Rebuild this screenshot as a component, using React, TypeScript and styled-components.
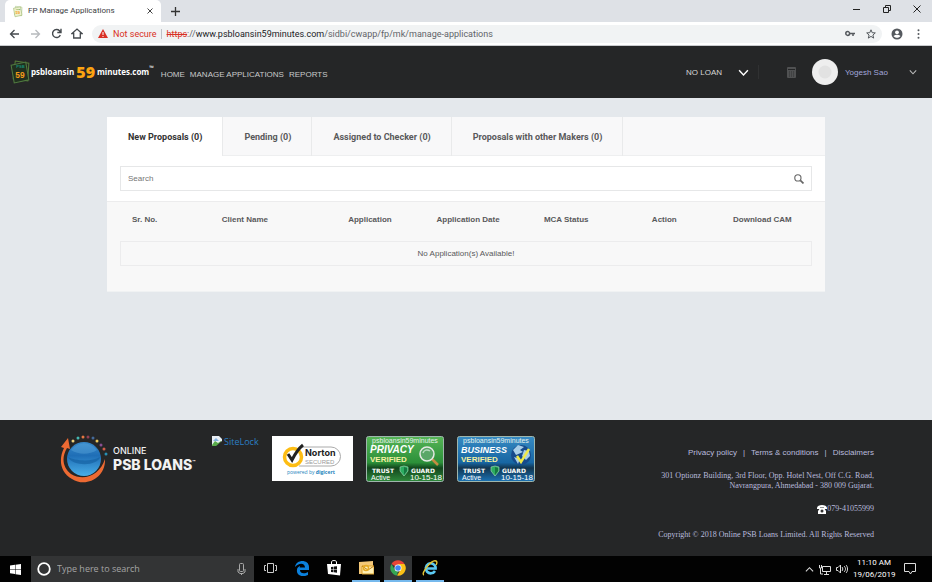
import React from "react";
import styled, { createGlobalStyle } from "styled-components";

const sans = `"Liberation Sans", Arial, sans-serif`;
const heading = `Roboto, "Liberation Sans", sans-serif`;
const browser = `Roboto, "Open Sans", sans-serif`;
const system = `"Open Sans", "Noto Sans", sans-serif`;

const GlobalStyle = createGlobalStyle`
  *, *::before, *::after { box-sizing: border-box; }
  body { margin: 0; background: #e4e8ec; font-family: ${sans}; }
  button, input { font: inherit; }
  button { border: 0; padding: 0; background: none; color: inherit; cursor: pointer; }
  a { color: inherit; text-decoration: none; }
  svg { display: block; flex: none; }
  p, h1 { margin: 0; }
`;

const Screen = styled.div`
  min-height: 100vh;
  display: flex;
  flex-direction: column;
`;

const TabStrip = styled.div`
  display: flex;
  align-items: flex-end;
  height: 22px;
  padding-left: 5px;
  background: #dee1e6;
  color: #3c4043;
`;

const BrowserTab = styled.div`
  display: flex;
  align-items: center;
  width: 156px;
  height: 22px;
  padding: 0 5px 0 8px;
  gap: 5px;
  border-radius: 5px 5px 0 0;
  background: #fff;
  font: 8px/22px ${browser};
`;

const TabTitle = styled.span`
  flex: 1;
  white-space: nowrap;
`;

const IconButton = styled.button`
  display: flex;
  align-items: center;
  justify-content: center;
  flex: none;
  width: 12px;
  height: 12px;
`;

const NewTab = styled(IconButton)`
  align-self: center;
  margin-left: 8px;
`;

const WindowControls = styled.div`
  display: flex;
  align-self: flex-start;
  gap: 18px;
  margin-left: auto;
  padding: 3px 9px 0 0;
`;

const AddressBar = styled.div`
  display: flex;
  align-items: center;
  height: 24px;
  padding: 0 8px;
  gap: 9px;
  background: #fff;
  border-bottom: 1px solid #c9cbce;
  color: #5f6368;
`;

const Omnibox = styled.div`
  display: flex;
  flex: 1;
  align-items: center;
  height: 18px;
  padding: 0 5px 0 6px;
  border-radius: 9px;
  background: #f1f3f4;
  font: 9px/18px ${browser};
  white-space: nowrap;
`;

const Insecure = styled.span`
  margin-left: 5px;
  padding-right: 4px;
  color: #d93025;
`;

const Url = styled.span`
  flex: 1;
  padding-left: 5px;
  border-left: 1px solid #bdc1c6;
  line-height: 10px;
  s { color: #d93025; }
  b { color: #202124; font-weight: 400; }
`;

const OmniActions = styled.div`
  display: flex;
  gap: 9px;
`;

const SiteHeader = styled.header`
  display: flex;
  align-items: center;
  height: 52px;
  padding: 0 15px 0 10px;
  background: #252627;
  color: #fff;
`;

const Brand = styled.a`
  display: flex;
  align-items: center;
  font: 700 8px/16px ${system};
  white-space: nowrap;
`;

const BrandNumber = styled.span`
  margin: 0 2px;
  color: #fca311;
  font-size: 16px;
  font-weight: 800;
`;

const BrandMark = styled.span`
  align-self: flex-start;
  font-size: 6px;
  line-height: 16px;
`;

const SiteNav = styled.nav`
  display: flex;
  gap: 5px;
  margin: 5px 0 0 7px;
  color: #c9cacb;
  font-size: 8px;
  line-height: 12px;
`;

const AccountArea = styled.div`
  display: flex;
  align-items: center;
  margin-left: auto;
`;

const LoanPicker = styled.button`
  display: flex;
  align-items: center;
  justify-content: space-between;
  width: 73px;
  height: 14px;
  padding-right: 9px;
  border-right: 1px solid #303132;
  color: #d6d6d6;
  font-size: 8px;
`;

const CalculatorButton = styled(IconButton)`
  margin: 0 15px 0 26px;
`;

const Avatar = styled.span`
  display: flex;
  align-items: center;
  justify-content: center;
  width: 26px;
  height: 26px;
  border-radius: 50%;
  background: #eee;
`;

const UserMenu = styled.button`
  display: flex;
  align-items: center;
  justify-content: space-between;
  width: 72px;
  margin-left: 7px;
  color: #a3a6dc;
  font-size: 8px;
`;

const Main = styled.main`
  flex: 1;
  padding: 19px 107px;
  background: #e4e8ec;
`;

const Panel = styled.section`
  border-bottom: 1px solid #f0f2f3;
  background: #fff;
`;

const TabList = styled.div`
  display: flex;
  height: 39px;
  border-bottom: 1px solid #eeeff0;
  background: #f8f8f9;
`;

const ProposalTab = styled.button<{ $active?: boolean }>`
  height: 39px;
  padding: 0 20px 0 21px;
  border-right: 1px solid #e9eaeb;
  background: ${(p) => (p.$active ? "#fff" : "transparent")};
  color: ${(p) => (p.$active ? "#333" : "#58595b")};
  font-family: ${heading};
  font-size: 9px;
  font-weight: 700;
  white-space: nowrap;
`;

const SearchRow = styled.div`
  padding: 10px 13px;
`;

const SearchBox = styled.label`
  display: flex;
  align-items: center;
  height: 25px;
  padding: 0 7px;
  border: 1px solid #e6e7e8;
  background: #fff;
`;

const SearchInput = styled.input`
  flex: 1;
  min-width: 0;
  height: 20px;
  padding: 0;
  border: 0;
  outline: 0;
  background: transparent;
  color: #555;
  font-size: 8px;
  &::placeholder { color: #757575; opacity: 1; }
`;

const TableArea = styled.div`
  padding: 0 13px 25px;
  border-top: 1px solid #ececed;
  background: #f8f8f8;
`;

const Table = styled.table`
  width: 100%;
  border-collapse: collapse;
  table-layout: fixed;
`;

const HeadCell = styled.th<{ $width?: string }>`
  width: ${(p) => p.$width ?? "auto"};
  height: 39px;
  padding: 0 0 4px;
  color: #58595b;
  font-size: 8px;
  font-weight: 700;
  white-space: nowrap;
`;

const EmptyCell = styled.td`
  height: 24px;
  padding: 0;
  border: 1px solid #ececed;
  color: #58595b;
  font-size: 8px;
  text-align: center;
`;

const SiteFooter = styled.footer`
  display: flex;
  align-items: flex-start;
  min-height: 136px;
  padding: 14px 58px 0 60px;
  background: #252627;
  color: #b9bbdd;
`;

const FooterBrand = styled.div`
  display: flex;
  align-items: center;
  gap: 5px;
  width: 152px;
  color: #f2f2f2;
  font: 500 9px/12px Inter, sans-serif;
`;

const BrandName = styled.div`
  font-size: 14px;
  font-weight: 800;
  line-height: 15px;
  white-space: nowrap;
  sup { font-size: 5px; line-height: 0; vertical-align: 6px; }
`;

const SealRow = styled.div`
  display: flex;
  gap: 13px;
  padding-top: 2px;
`;

const SiteLock = styled.a`
  display: flex;
  align-items: flex-start;
  gap: 1px;
  color: #2b7fc4;
  font: 9px/12px ${system};
`;

const FooterInfo = styled.div`
  flex: 1;
  padding-top: 13px;
  font: 8px/10px "Liberation Serif", "Times New Roman", serif;
  text-align: right;
`;

const PolicyLinks = styled.nav`
  display: flex;
  justify-content: flex-end;
  margin-bottom: 12px;
  font: 8px/12px ${sans};
  a + a::before { content: "|"; margin: 0 6px; }
`;

const InfoLine = styled.p<{ $gap?: number }>`
  margin-bottom: ${(p) => p.$gap ?? 0}px;
`;

const Phone = styled.p`
  display: flex;
  align-items: center;
  justify-content: flex-end;
  margin-bottom: 16px;
`;

const Taskbar = styled.div`
  display: flex;
  align-items: stretch;
  height: 26px;
  background: #020202;
  color: #fff;
`;

const StartButton = styled.button`
  display: flex;
  align-items: center;
  justify-content: center;
  width: 31px;
`;

const SystemSearch = styled.label`
  display: flex;
  align-items: center;
  gap: 6px;
  width: 223px;
  padding: 0 8px 0 6px;
  background: #333435;
`;

const SystemInput = styled.input`
  flex: 1;
  min-width: 0;
  height: 20px;
  padding: 0;
  border: 0;
  outline: 0;
  background: transparent;
  color: #fff;
  font: 9px/20px ${system};
  &::placeholder { color: #a5a5a5; opacity: 1; }
`;

const Apps = styled.div`
  display: flex;
  gap: 4px;
  padding-left: 2px;
`;

const AppButton = styled.button<{ $open?: boolean; $focused?: boolean }>`
  display: flex;
  align-items: center;
  justify-content: center;
  width: 28px;
  border-bottom: 2px solid ${(p) => (p.$open ? "#76b9ed" : "transparent")};
  background: ${(p) => (p.$focused ? "#333537" : "transparent")};
`;

const Tray = styled.div`
  display: flex;
  align-items: center;
  gap: 5px;
  margin-left: auto;
  padding-right: 16px;
`;

const Clock = styled.time`
  width: 42px;
  margin-right: 4px;
  font: 8px/12px ${browser};
  text-align: center;
`;

const Chevron = ({ size, color, weight = 1 }: { size: number; color: string; weight?: number }) => (
  <svg width={size} height={size} viewBox="0 0 10 10" fill="none" stroke={color} strokeWidth={weight}>
    <path d="M1 3l4 4.3L9 3" />
  </svg>
);

const NotesLogo = ({ size, bright }: { size: number; bright?: boolean }) => (
  <svg width={size} height={size + 3} viewBox="0 0 20 23" fill="none">
    <path d="M5 1l13 2-1 17-14-2z" stroke={bright ? "#557b37" : "#9fbd72"} />
    <path d="M1 5l14-3 3 17-14 3z" fill={bright ? "#20301f" : "#eef2cf"} stroke={bright ? "#517c40" : "#8ead5f"} />
    <text x="6" y="8" fill={bright ? "#168a72" : "#6c9b4c"} fontSize="4" fontWeight="700" fontFamily="Liberation Sans">PSB</text>
    <text x="5" y="17" fill="#f59b19" fontSize="8" fontWeight="700" fontFamily="Liberation Sans">59</text>
  </svg>
);

const PsbGlobe = () => (
  <svg width="48" height="49" viewBox="0 0 48 49">
    <defs>
      <linearGradient id="globe" x2="0" y2="1">
        <stop stopColor="#3688c9" />
        <stop offset=".4" stopColor="#1f6eb6" />
        <stop offset="1" stopColor="#49aee8" />
      </linearGradient>
    </defs>
    <circle cx="24" cy="25" r="17" fill="url(#globe)" />
    <path d="M8 23c7 4 24 5 32 0-2 9-27 10-32 0" fill="#135e9e" opacity=".6" />
    <path d="M11 16c7-9 19-9 26 0-8 5-18 5-26 0" fill="#67b3e2" opacity=".35" />
    <path d="M1 13L8 4l2 11-3-1C1 24 3 34 11 40c13 8 29 1 34-15 1 19-19 29-33 20C-1 38-1 24 4 14z" fill="#ed6a33" />
    {[
      [13, 7, "#f2d37c"], [18, 4, "#45b8b1"], [23, 3, "#e67642"], [28, 3, "#923e52"], [33, 4, "#456a9a"],
      [37, 7, "#edc75b"], [41, 11, "#894f91"], [44, 15, "#d25c49"], [46, 20, "#278fb4"],
    ].map(([cx, cy, fill]) => (
      <circle key={cx} cx={cx} cy={cy} r="1.5" fill={String(fill)} />
    ))}
  </svg>
);

const NortonSeal = () => (
  <svg width="81" height="45" viewBox="0 0 81 45" role="img" aria-label="Norton Secured powered by digicert">
    <path fill="#fff" d="M0 0h81v45H0z" />
    <path d="M28 11h31a9 9 0 010 19H27" fill="none" stroke="#aaa" />
    <circle cx="21" cy="21" r="8.5" fill="#fff" stroke="#fdbd13" strokeWidth="3.5" />
    <path d="M16 18l4 6c3-6 6-11 11-15" fill="none" stroke="#222" strokeWidth="3" />
    <text x="33" y="20" fill="#222" fontFamily="Inter" fontSize="9" fontWeight="700">Norton</text>
    <text x="33" y="28" fill="#999" fontFamily="Liberation Sans" fontSize="6">SECURED</text>
    <text x="15" y="38" fill="#2584bd" fontFamily="Open Sans" fontSize="5">powered by <tspan fontWeight="700">digicert</tspan></text>
  </svg>
);

const TrustSeal = ({ kind }: { kind: "PRIVACY" | "BUSINESS" }) => {
  const green = kind === "PRIVACY";
  return (
    <svg width="78" height="46" viewBox="0 0 78 46" role="img" aria-label={`${kind} verified by Trust Guard`}>
      <defs>
        <linearGradient id={kind} x2="0" y2="1">
          <stop stopColor={green ? "#56b557" : "#378bc3"} />
          <stop offset=".58" stopColor={green ? "#2c9039" : "#1766a3"} />
          <stop offset=".7" stopColor={green ? "#12451d" : "#12354f"} />
          <stop offset="1" stopColor={green ? "#2e8a3b" : "#1b73b5"} />
        </linearGradient>
      </defs>
      <rect x=".5" y=".5" width="77" height="45" rx="2" fill={`url(#${kind})`} stroke="#9fb6ad" />
      {green ? (
        <g fill="none">
          <path d="M66 23l6 6" stroke="#c48b42" strokeWidth="2.5" />
          <circle cx="61" cy="18" r="7" fill="#5aa768" stroke="#e5e9e4" strokeWidth="1.5" />
          <path d="M57 17c1-3 4-4 7-2" stroke="#b6dbbd" strokeWidth="1.5" />
        </g>
      ) : (
        <g>
          <circle cx="64" cy="19" r="10" fill="#164a8b" />
          <path d="M56 14l5-5 6 2-4 3 3 2-7 3zM67 14l5 1 1 5-4 4-4-4zM57 21l6 2-2 5z" fill="#a8cee8" />
          <path d="M60 20l4 6 8-13" fill="none" stroke="#efe94a" strokeWidth="2.5" />
        </g>
      )}
      <text x="39" y="7" textAnchor="middle" fill="#e5f2ed" fontFamily="Liberation Sans" fontSize="7">psbloansin59minutes</text>
      <text x="4" y="17" fill="#fff" fontFamily="Liberation Sans" fontSize={green ? 10 : 9} fontStyle="italic" fontWeight="700">{kind}</text>
      <text x="4" y="26" fill="#f5f1a1" fontFamily="Liberation Sans" fontSize="8" fontWeight="700">VERIFIED</text>
      <text x="6" y="37" fill="#fff" fontFamily="DejaVu Sans" fontSize="6" fontWeight="700">TRUST</text>
      <text x="45" y="37" fill="#fff" fontFamily="DejaVu Sans" fontSize="6" fontWeight="700">GUARD</text>
      <path d="M34 31l4-1 4 1v4l-4 5-4-5z" fill="#2cad61" stroke="#a8dfbd" strokeWidth=".6" />
      <path d="M38 31v8l3-4v-3z" fill="#167941" />
      <text x="5" y="44" fill="#fff" fontFamily="Liberation Sans" fontSize="7">Active</text>
      <text x="76" y="44" textAnchor="end" fill="#fff" fontFamily="Liberation Sans" fontSize="8">10-15-18</text>
    </svg>
  );
};

const ChromeLogo = () => (
  <svg width="16" height="16" viewBox="0 0 16 16">
    <path d="M8 8L1.5 4a7.5 7.5 0 0113 0z" fill="#e74436" />
    <path d="M1.5 4L5 10l3 1-1 4.5A7.5 7.5 0 011.5 4" fill="#35a653" />
    <path d="M14.5 4H8l3 5-4 6.5A7.5 7.5 0 0014.5 4" fill="#fbc116" />
    <circle cx="8" cy="8" r="3.5" fill="#fff" />
    <circle cx="8" cy="8" r="2.8" fill="#4285f4" />
  </svg>
);

const EdgeE = ({ light }: { light?: boolean }) => (
  <svg width="16" height="16" viewBox="0 0 16 16" fill="none">
    {light ? (
      <>
        <path d="M13 11a5 5 0 11.6-4v1.5H4" stroke="#5bc8f1" strokeWidth="2.6" />
        <path d="M2 15C-2 14 10-1 14 1c2 1 0 4 0 4" stroke="#e5c635" strokeWidth="1.4" />
      </>
    ) : (
      <path d="M1 7C2-1 15-1 15 7v3H6c0 4 5 4 8 2v3C8 18 2 15 3 10c0-3 3-4 3-4l-.3 1.6H11C11 2 4 3 1 7" fill="#0b80dc" />
    )}
  </svg>
);

const columns = ["Sr. No.", "Client Name", "Application", "Application Date", "MCA Status", "Action", "Download CAM"];
const widths: Record<number, string> = { 0: "7%", 1: "22%" };
const tabs = ["New Proposals (0)", "Pending (0)", "Assigned to Checker (0)", "Proposals with other Makers (0)"];

const BrowserChrome = () => (
  <>
    <TabStrip>
      <BrowserTab>
        <NotesLogo size={10} />
        <TabTitle>FP Manage Applications</TabTitle>
        <IconButton aria-label="Close tab">
          <svg width="6" height="6" viewBox="0 0 6 6" stroke="#444"><path d="M.5.5l5 5m0-5l-5 5" /></svg>
        </IconButton>
      </BrowserTab>
      <NewTab aria-label="New tab">
        <svg width="9" height="9" viewBox="0 0 9 9" stroke="#333" strokeWidth="1.3"><path d="M4.5 0v9M0 4.5h9" /></svg>
      </NewTab>
      <WindowControls>
        <IconButton aria-label="Minimize"><svg width="8" height="8" viewBox="0 0 8 8" stroke="#222"><path d="M0 4.5h7" /></svg></IconButton>
        <IconButton aria-label="Restore"><svg width="8" height="8" viewBox="0 0 8 8" fill="none" stroke="#222"><path d="M.5 2.5h5v5h-5zM2.5 2V.5h5v5H6" /></svg></IconButton>
        <IconButton aria-label="Close"><svg width="8" height="8" viewBox="0 0 8 8" stroke="#222"><path d="M.5.5l7 7m0-7l-7 7" /></svg></IconButton>
      </WindowControls>
    </TabStrip>
    <AddressBar>
      <IconButton aria-label="Back"><svg width="11" height="10" viewBox="0 0 11 10" fill="none" stroke="#454a4e" strokeWidth="1.3"><path d="M5.5 1L1.5 5l4 4M1.5 5H10" /></svg></IconButton>
      <IconButton aria-label="Forward"><svg width="11" height="10" viewBox="0 0 11 10" fill="none" stroke="#b7babd" strokeWidth="1.3"><path d="M5.5 1l4 4-4 4M9.5 5H1" /></svg></IconButton>
      <IconButton aria-label="Reload"><svg width="11" height="11" viewBox="0 0 11 11" fill="none" stroke="#454a4e" strokeWidth="1.4"><path d="M9.3 7a4 4 0 11-.8-4.2L10 4.5M10 .8v3.7H6.3" /></svg></IconButton>
      <IconButton aria-label="Home"><svg width="12" height="11" viewBox="0 0 12 11" fill="none" stroke="#454a4e" strokeWidth="1.3"><path d="M1 5.5L6 1l5 4.5H9.3V10H2.7V5.5z" /></svg></IconButton>
      <Omnibox>
        <svg width="10" height="9" viewBox="0 0 10 9"><path d="M5 0l5 9H0z" fill="#d93025" /><path d="M5 3v3M5 7v1" stroke="#fff" /></svg>
        <Insecure>Not secure</Insecure>
        <Url><s>https</s>://<b>www.psbloansin59minutes.com</b>/sidbi/cwapp/fp/mk/manage-applications</Url>
        <OmniActions>
          <IconButton aria-label="Saved passwords"><svg width="10" height="7" viewBox="0 0 10 7" fill="none" stroke="#55595e" strokeWidth="1.5"><circle cx="2.7" cy="3.5" r="1.9" /><path d="M4.6 3.5H10M8 3.5V6" /></svg></IconButton>
          <IconButton aria-label="Bookmark"><svg width="10" height="10" viewBox="0 0 10 10" fill="none" stroke="#55595e"><path d="M5 .8l1.2 2.9 3.1.2L6.9 6l.8 3.1L5 7.4 2.3 9.1 3.1 6 .7 3.9l3.1-.2z" /></svg></IconButton>
        </OmniActions>
      </Omnibox>
      <IconButton aria-label="Profile"><svg width="12" height="12" viewBox="0 0 12 12"><circle cx="6" cy="6" r="5.5" fill="#55595e" /><circle cx="6" cy="4.3" r="1.9" fill="#fff" /><path d="M2.5 8c2-1.6 5-1.6 7 0-1.5 2.4-5.5 2.4-7 0" fill="#fff" /></svg></IconButton>
      <IconButton aria-label="Menu"><svg width="3" height="10" viewBox="0 0 3 10" fill="#55595e"><circle cx="1.5" cy="1.2" r="1" /><circle cx="1.5" cy="5" r="1" /><circle cx="1.5" cy="8.8" r="1" /></svg></IconButton>
    </AddressBar>
  </>
);

const Header = () => (
  <SiteHeader>
    <Brand href="#home">
      <NotesLogo size={21} bright />
      psbloansin<BrandNumber>59</BrandNumber>minutes.com<BrandMark>™</BrandMark>
    </Brand>
    <SiteNav aria-label="Main">
      <a href="#home">HOME</a>
      <a href="#applications">MANAGE APPLICATIONS</a>
      <a href="#reports">REPORTS</a>
    </SiteNav>
    <AccountArea>
      <LoanPicker>NO LOAN<Chevron size={11} color="#fff" weight={1.3} /></LoanPicker>
      <CalculatorButton aria-label="Calculator">
        <svg width="9" height="11" viewBox="0 0 9 11"><rect width="9" height="11" rx="1" fill="#505152" /><path d="M1 2.5h7" stroke="#252627" /><path d="M2 5h5M2 7h5M2 9h5" stroke="#333435" strokeDasharray="1 1" /></svg>
      </CalculatorButton>
      <Avatar><svg width="14" height="14" viewBox="0 0 14 14" fill="#e2e2e2"><circle cx="7" cy="7" r="6.5" /></svg></Avatar>
      <UserMenu>Yogesh Sao<Chevron size={8} color="#bbb" weight={1.3} /></UserMenu>
    </AccountArea>
  </SiteHeader>
);

const Footer = () => (
  <SiteFooter>
    <FooterBrand>
      <PsbGlobe />
      <div>ONLINE<BrandName>PSB LOANS<sup>™</sup></BrandName></div>
    </FooterBrand>
    <SealRow>
      <SiteLock href="#sitelock">
        <svg width="11" height="11" viewBox="0 0 11 11"><path d="M0 0h7l3 3v7H0z" fill="#e8eef4" /><path d="M1 5l3-3 3 3z" fill="#82aede" /><path d="M0 9l3-4 3 2 3-2v5H0z" fill="#58aa4a" /><path d="M3 11l8-7v7z" fill="#252627" /></svg>
        SiteLock
      </SiteLock>
      <a href="#norton"><NortonSeal /></a>
      <a href="#privacy-seal"><TrustSeal kind="PRIVACY" /></a>
      <a href="#business-seal"><TrustSeal kind="BUSINESS" /></a>
    </SealRow>
    <FooterInfo>
      <PolicyLinks aria-label="Policies">
        <a href="#privacy">Privacy policy</a><a href="#terms">Terms &amp; conditions</a><a href="#disclaimers">Disclaimers</a>
      </PolicyLinks>
      <InfoLine>301 Optionz Building, 3rd Floor, Opp. Hotel Nest, Off C.G. Road,</InfoLine>
      <InfoLine $gap={13}>Navrangpura, Ahmedabad - 380 009 Gujarat.</InfoLine>
      <Phone>
        <svg width="10" height="9" viewBox="0 0 10 9" fill="#fff"><path d="M0 3c0-4 10-4 10 0v1H7V2.5H3V4H0zM3 3h4l2 3v3H1V6z" /><circle cx="5" cy="6" r="1.5" fill="#333" /></svg>
        079-41055999
      </Phone>
      <InfoLine>Copyright © 2018 Online PSB Loans Limited. All Rights Reserved</InfoLine>
    </FooterInfo>
  </SiteFooter>
);

const SystemBar = () => (
  <Taskbar>
    <StartButton aria-label="Start"><svg width="11" height="11" viewBox="0 0 11 11" fill="#fff"><path d="M0 1.5L5 .8V5H0zM5.5.7L11 0v5H5.5zM0 5.6h5V10l-5-.7zM5.5 5.6H11V11l-5.5-.8z" /></svg></StartButton>
    <SystemSearch>
      <svg width="14" height="14" viewBox="0 0 14 14"><circle cx="7" cy="7" r="5.8" fill="none" stroke="#fff" strokeWidth="1.8" /></svg>
      <SystemInput placeholder="Type here to search" aria-label="Type here to search" />
      <svg width="9" height="12" viewBox="0 0 9 12" fill="none" stroke="#aaa"><rect x="2.5" y=".5" width="4" height="8" rx="1" /><path d="M1 6v3l2 1.5h3L8 9V6M4.500 10v2" /></svg>
    </SystemSearch>
    <Apps>
      <AppButton aria-label="Task view"><svg width="13" height="10" viewBox="0 0 13 10" fill="none" stroke="#ccc"><path d="M3.5.5h6v9h-6zM2 2.5H.5v5H2M11 2.5h1.5v5H11" /></svg></AppButton>
      <AppButton aria-label="Edge"><EdgeE /></AppButton>
      <AppButton aria-label="Store"><svg width="14" height="16" viewBox="0 0 14 16"><path d="M4.5 4V2c0-2 5-2 5 0v2" fill="none" stroke="#fff" /><path d="M0 4h14l-1 11.5L1 14z" fill="#fff" /><path d="M4 7l2.5-.3v2.5H4zM7 6.5l3-.3v3H7zM4 9.7h2.5v2.5L4 12zM7 9.7h3v3l-3-.4z" fill="#111" /></svg></AppButton>
      <AppButton aria-label="Outlook" $open><svg width="16" height="14" viewBox="0 0 16 14"><path d="M1 1l14-1v9l-4 4H1z" fill="#f4c878" /><path d="M4 5h12v8H4z" fill="#fff0b6" stroke="#dba02b" /><path d="M4 5l6 4 6-4" fill="none" stroke="#c47f16" /><circle cx="8" cy="7" r="2.5" fill="none" stroke="#e6aa25" strokeWidth="1.5" /></svg></AppButton>
      <AppButton aria-label="Chrome" $open $focused><ChromeLogo /></AppButton>
      <AppButton aria-label="Internet Explorer" $open><EdgeE light /></AppButton>
    </Apps>
    <Tray>
      <svg width="9" height="9" viewBox="0 0 10 10" fill="none" stroke="#ddd" strokeWidth="1.2"><path d="M1 7l4-4 4 4" /></svg>
      <svg width="12" height="11" viewBox="0 0 12 11" fill="none" stroke="#ddd"><path d="M3.5 2.5h8v5h-8zM7.5 8v2M5 10.5h5M.5 1v3h2V1M1.5 4v6H4" /></svg>
      <svg width="12" height="10" viewBox="0 0 12 10" fill="none" stroke="#ddd"><path d="M.5 3.5H2L4.5 1v8L2 6.5H.5zM6 3c1 1 1 3 0 4M8 2c2 2 2 4 0 6M10 1c2 2 2 6 0 8" /></svg>
      <Clock>11:10 AM<br />19/06/2019</Clock>
      <svg width="12" height="12" viewBox="0 0 12 12" fill="none" stroke="#ddd"><path d="M.5.5h11v8H8L6.5 11 5 8.500H.5z" /></svg>
    </Tray>
  </Taskbar>
);

export default function App() {
  return (
    <Screen>
      <GlobalStyle />
      <BrowserChrome />
      <Header />
      <Main>
        <Panel>
          <TabList role="tablist">
            {tabs.map((tab, index) => (
              <ProposalTab key={tab} role="tab" aria-selected={index === 0} $active={index === 0}>{tab}</ProposalTab>
            ))}
          </TabList>
          <SearchRow>
            <SearchBox>
              <SearchInput type="text" placeholder="Search" aria-label="Search" />
              <svg width="10" height="10" viewBox="0 0 9 9" fill="none" stroke="#666"><circle cx="3.5" cy="3.5" r="2.8" /><path d="M5.7 5.7l2.8 2.8" strokeWidth="1.5" /></svg>
            </SearchBox>
          </SearchRow>
          <TableArea>
            <Table>
              <thead>
                <tr>{columns.map((name, index) => <HeadCell key={name} $width={widths[index]}>{name}</HeadCell>)}</tr>
              </thead>
              <tbody>
                <tr><EmptyCell colSpan={columns.length}>No Application(s) Available!</EmptyCell></tr>
              </tbody>
            </Table>
          </TableArea>
        </Panel>
      </Main>
      <Footer />
      <SystemBar />
    </Screen>
  );
}
